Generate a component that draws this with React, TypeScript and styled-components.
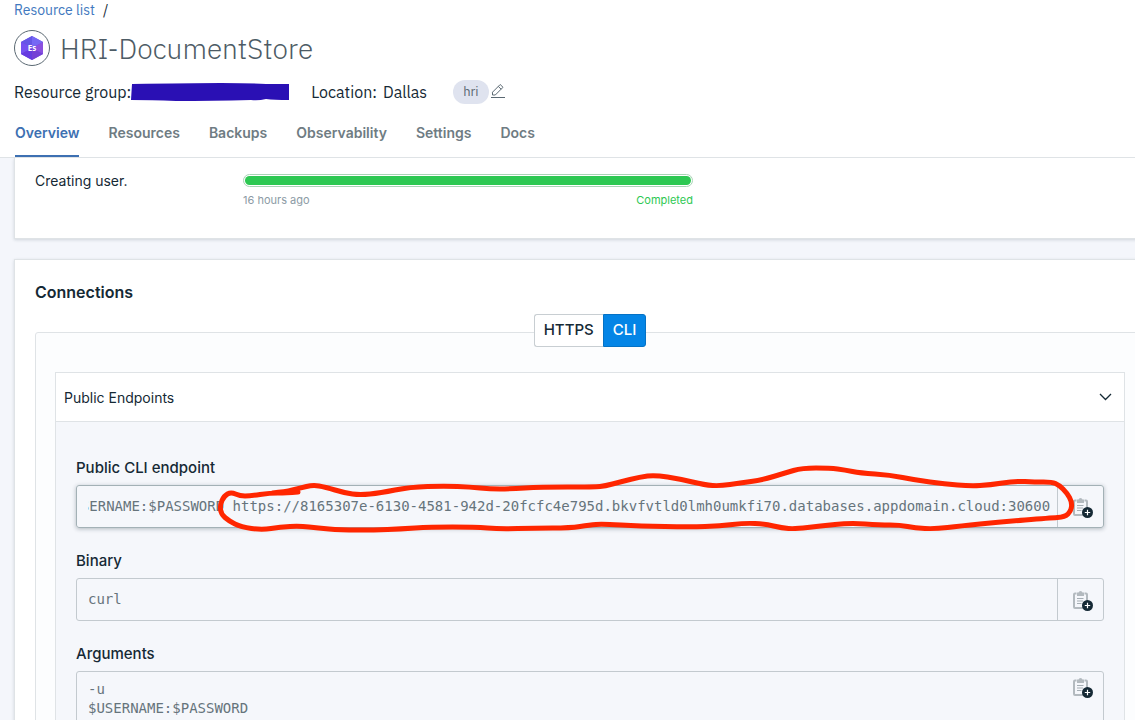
import React, { useLayoutEffect, useRef } from "react";
import styled, { createGlobalStyle } from "styled-components";

const plex = `"IBM Plex Sans", "Noto Sans", sans-serif`;
const inter = `Inter, "Liberation Sans", sans-serif`;
const mono = `"DejaVu Sans Mono", "Liberation Mono", monospace`;
const ink = "#152935";
const muted = "#5a6872";
const line = "#dfe3e6";

const GlobalStyle = createGlobalStyle`
  *, *::before, *::after { box-sizing: border-box; }
  body { margin: 0; background: #f4f6fb; color: ${ink}; font-family: ${inter}; font-size: 14px; }
  button, input, textarea { font: inherit; color: inherit; }
`;

const Page = styled.div`
  display: flex;
  flex-direction: column;
  height: 100vh;
  overflow: hidden;
`;

const Header = styled.header`
  flex: none;
  background: #fff;
  border-bottom: 1px solid ${line};
  padding: 0 14px;
  font-family: ${plex};
`;

const Breadcrumb = styled.nav`
  display: flex;
  gap: 8px;
  font-size: 14px;
  line-height: 20px;
  a { color: #4178be; text-decoration: none; }
`;

const TitleRow = styled.div`
  display: flex;
  align-items: center;
  gap: 10px;
  margin-top: 10px;
`;

const Title = styled.h1`
  margin: 0;
  padding-top: 2px;
  font-size: 28px;
  line-height: 34px;
  font-weight: 300;
  color: #4d5b65;
`;

const InfoRow = styled.div`
  display: flex;
  align-items: center;
  height: 24px;
  margin-top: 14px;
  font-size: 16px;
  line-height: 24px;
  white-space: nowrap;
`;

const Location = styled.span`
  display: flex;
  gap: 6px;
  margin: 0 26px 0 20px;
`;

const Tag = styled.span`
  padding: 0 10px;
  border-radius: 12px;
  background: #dfe3ef;
  color: ${muted};
  font-size: 13px;
  line-height: 24px;
`;

const IconButton = styled.button`
  display: flex;
  padding: 0 0 2px;
  border: 0;
  background: none;
  margin-left: 1px;
`;

const Tabs = styled.nav`
  display: flex;
  gap: 29px;
  margin-top: 16px;
  padding-left: 1px;
  font-family: ${inter};
`;

const Tab = styled.a<{ $active?: boolean }>`
  height: 37px;
  font-size: 14px;
  font-weight: 600;
  line-height: 26px;
  text-decoration: none;
  color: ${(p) => (p.$active ? "#3d70b2" : "#6f7c83")};
  border-bottom: 2px solid ${(p) => (p.$active ? "#3d70b2" : "transparent")};
`;

const Main = styled.main`
  display: flex;
  flex-direction: column;
  flex: 1;
  gap: 20px;
  min-height: 0;
  overflow: hidden;
  padding-left: 14px;
`;

const Card = styled.section<{ $continued?: boolean }>`
  flex: none;
  margin-right: -31px;
  padding: 21px 20px 20px;
  background: #fff;
  border: 1px solid ${line};
  box-shadow: 0 1px 3px rgba(21, 41, 53, 0.16);
  ${(p) => p.$continued && "border-top: 0; padding-top: 12px; padding-bottom: 29px;"}
`;

const Task = styled.div`
  display: grid;
  grid-template-columns: 208px 450px;
`;

const TaskName = styled.span`
  line-height: 22px;
`;

const Track = styled.div`
  height: 13px;
  margin-top: 4px;
  padding: 1px;
  border: 1px solid #a9d3b6;
  border-radius: 7px;
`;

const Bar = styled.div`
  height: 100%;
  border-radius: 5px;
  background: #2dc852;
`;

const TaskMeta = styled.div`
  display: flex;
  justify-content: space-between;
  margin-top: 4px;
  font-size: 11px;
  line-height: 18px;
  color: #8c9ba5;
`;

const Done = styled.span`
  color: #2dc852;
`;

const CardTitle = styled.h2`
  margin: 0;
  font-size: 16px;
  font-weight: 600;
  line-height: 22px;
`;

const Panel = styled.div`
  margin-top: 29px;
  padding: 0 19px 20px;
  background: #fcfdfe;
  border: 1px solid ${line};
  border-radius: 3px;
`;

const Toggle = styled.div`
  display: flex;
  width: fit-content;
  margin: -19px auto 25px;
`;

const ToggleButton = styled.button<{ $active?: boolean }>`
  height: 33px;
  padding: 0 9px 2px;
  font-size: 15px;
  font-weight: 500;
  line-height: 20px;
  color: ${(p) => (p.$active ? "#fff" : ink)};
  background: ${(p) => (p.$active ? "#0485e6" : "#fff")};
  border: 1px solid ${(p) => (p.$active ? "#0572c5" : "#c8ced2")};
  border-right-width: ${(p) => (p.$active ? "1px" : "0")};
  border-radius: ${(p) => (p.$active ? "0 3px 3px 0" : "3px 0 0 3px")};
`;

const Accordion = styled.div`
  border: 1px solid ${line};
  background: #f5f7fb;
`;

const AccordionHeader = styled.button`
  display: flex;
  align-items: center;
  justify-content: space-between;
  width: 100%;
  height: 49px;
  padding: 0 12px 0 8px;
  border: 0;
  border-bottom: 1px solid ${line};
  background: #fff;
`;

const AccordionBody = styled.div`
  display: flex;
  flex-direction: column;
  gap: 21px;
  padding: 34px 20px 20px;
`;

const Label = styled.label`
  display: block;
  margin-bottom: 5px;
  font-size: 15px;
  font-weight: 500;
  line-height: 24px;
`;

const Field = styled.div<{ $raised?: boolean }>`
  position: relative;
  display: flex;
  border: 1px solid ${(p) => (p.$raised ? "#a3b1b6" : "#c3cacf")};
  border-radius: 3px;
  box-shadow: ${(p) => (p.$raised ? "0 1px 4px rgba(21, 41, 53, 0.3)" : "none")};
`;

const Value = styled.input`
  flex: 1;
  min-width: 0;
  height: 41px;
  margin: 0 7px 0 11px;
  padding: 0 0 2px;
  border: 0;
  outline: 0;
  background: none;
  font-family: ${mono};
  font-size: 14px;
  color: #66747c;
`;

const Lines = styled.textarea`
  flex: 1;
  min-width: 0;
  padding: 8px 11px;
  border: 0;
  outline: 0;
  resize: none;
  overflow: hidden;
  background: none;
  font-family: ${mono};
  font-size: 14px;
  line-height: 19px;
  color: #66747c;
`;

const CopyButton = styled.button<{ $top?: boolean }>`
  display: flex;
  align-items: ${(p) => (p.$top ? "flex-start" : "center")};
  width: 46px;
  padding: ${(p) => (p.$top ? "5px 0 0 14px" : "3px 0 0 14px")};
  border: 0;
  border-left: 1px solid ${(p) => (p.$top ? "transparent" : "#c3cacf")};
  background: none;
`;

const Marker = styled.svg`
  position: absolute;
  left: -1px;
  top: -1px;
  overflow: visible;
  pointer-events: none;
`;

const ServiceLogo = () => (
  <svg width="36" height="36" viewBox="0 0 36 36" aria-hidden="true">
    <circle cx="18" cy="18" r="17.5" fill="#fff" stroke="#5a6872" />
    <path d="M18 6 29 12v12L18 30 7 24V12z" fill="#6a4be8" />
    <path d="M18 6 29 12 18 18z" fill="#7668f4" />
    <path d="M18 6 7 12l11 6z" fill="#6557e6" />
    <path d="M7 12v12l11-6z" fill="#7552f0" />
    <path d="M29 12v12l-11-6z" fill="#8a50df" />
    <path d="M7 24l11 6V18z" fill="#663be0" />
    <path d="M29 24l-11 6V18z" fill="#7440d5" />
    <text x="18" y="21" textAnchor="middle" fill="#fff" fontFamily="Noto Sans, sans-serif" fontSize="8" fontWeight="700">
      Es
    </text>
  </svg>
);

const PencilIcon = () => (
  <svg width="16" height="16" viewBox="0 0 16 16" fill="none" stroke="#5a6872" strokeLinejoin="round" aria-hidden="true">
    <path d="M1 14.5h14" />
    <path d="M2.5 12V9.2L10.2 1.5 13 4.3 5.3 12zM8.3 3.4l2.8 2.8" />
  </svg>
);

const ChevronIcon = () => (
  <svg width="13" height="8" viewBox="0 0 13 8" fill="none" stroke={ink} strokeWidth="1.3" aria-hidden="true">
    <path d="M1 1l5.5 5.5L12 1" />
  </svg>
);

const ClipboardIcon = () => (
  <svg width="22" height="22" viewBox="0 0 22 22" aria-hidden="true">
    <path d="M4.500 3.500H3Q2 3.500 2 4.500v12.500q0 1 1 1h9M12.500 3.500H14q1 0 1 1V12" fill="none" stroke="#b3babf" strokeWidth="2" />
    <path d="M5 2.500h1.500Q6.800 1 8.500 1t2 1.500H12V6H5z" fill="#b3babf" />
    <path d="M5 8.500h6.500M5 11h6M5 13.500h4.500" stroke="#a5aeb4" strokeWidth="1.200" />
    <circle cx="15.500" cy="15.500" r="5.500" fill={ink} />
    <path d="M12.800 15.500h5.400M15.500 12.800v5.400" stroke="#fff" strokeWidth="1.200" />
  </svg>
);

const strokePoints: number[][] = [
  [222, 7], [210, 8], [194, 8], [174, 11], [164, 11], [155, 7], [148, 11], [144, 20], [145, 29], [153, 36], [165, 42],
  [186, 45], [204, 42], [224, 41], [242, 43], [264, 45], [299, 45], [324, 44], [354, 42], [399, 42], [424, 44],
  [459, 43], [494, 43], [514, 40], [526, 39], [564, 41], [614, 42], [644, 41], [669, 38], [689, 39], [706, 43],
  [719, 44], [744, 41], [774, 38], [804, 40], [824, 40], [839, 43], [859, 44], [884, 41], [924, 37], [974, 33],
  [989, 32], [995, 26], [996, 17], [991, 8], [983, 0], [976, -3], [959, -3], [939, -4], [914, 0], [894, 1],
  [869, -1], [839, -5], [814, -10], [784, -12], [769, -15], [754, -17], [726, -17], [709, -12], [686, -5], [664, -2],
  [644, 1], [629, 0], [604, -6], [579, -10], [564, -8], [544, -3], [529, 1], [519, 2], [464, 2], [434, 4], [414, 4],
  [394, 2], [369, 1], [334, 2], [304, 8], [284, 10], [269, 8], [249, 2], [237, 0], [224, 3], [209, 7], [184, 9],
];

// Joins the points with quadratic curves through their midpoints.
const smooth = (pts: number[][]) =>
  pts.slice(1, -1).reduce((d, [x, y], i) => {
    const [nx, ny] = pts[i + 2];
    return `${d}Q${x} ${y} ${(x + nx) / 2} ${(y + ny) / 2}`;
  }, `M${pts[0].join(" ")}`);

const tabs = ["Overview", "Resources", "Backups", "Observability", "Settings", "Docs"];

const endpoint =
  "$USERNAME:$PASSWORD https://8165307e-6130-4581-942d-20fcfc4e795d.bkvfvtld0lmh0umkfi70.databases.appdomain.cloud:30600";

export default function App() {
  const endpointRef = useRef<HTMLInputElement>(null);

  useLayoutEffect(() => {
    const el = endpointRef.current;
    if (el) el.scrollLeft = el.scrollWidth;
  }, []);

  return (
    <Page>
      <GlobalStyle />
      <Header>
        <Breadcrumb aria-label="Breadcrumb">
          <a href="#resources">Resource list</a>
          <span>/</span>
        </Breadcrumb>
        <TitleRow>
          <ServiceLogo />
          <Title>HRI-DocumentStore</Title>
        </TitleRow>
        <InfoRow>
          <span>Resource group:</span>
          <svg width="160" height="20" viewBox="0 0 160 20" aria-hidden="true">
            <path d="M1 2Q60 1 90 1t45 1h23v16q-15 0-23-1-8 2-15 1-40 1-75 1-25-1-45-1z" fill="#2a10b4" />
          </svg>
          <Location>
            <span>Location:</span>
            <span>Dallas</span>
          </Location>
          <Tag>hri</Tag>
          <IconButton type="button" aria-label="Edit tags">
            <PencilIcon />
          </IconButton>
        </InfoRow>
        <Tabs>
          {tabs.map((name, i) => (
            <Tab key={name} href={`#${name.toLowerCase()}`} $active={i === 0}>
              {name}
            </Tab>
          ))}
        </Tabs>
      </Header>
      <Main>
        <Card $continued>
          <Task>
            <TaskName>Creating user.</TaskName>
            <div>
              <Track role="progressbar" aria-label="Creating user" aria-valuenow={100}>
                <Bar />
              </Track>
              <TaskMeta>
                <span>16 hours ago</span>
                <Done>Completed</Done>
              </TaskMeta>
            </div>
          </Task>
        </Card>
        <Card>
          <CardTitle>Connections</CardTitle>
          <Panel>
            <Toggle>
              <ToggleButton type="button">HTTPS</ToggleButton>
              <ToggleButton type="button" $active>
                CLI
              </ToggleButton>
            </Toggle>
            <Accordion>
              <AccordionHeader type="button" aria-expanded="true">
                Public Endpoints
                <ChevronIcon />
              </AccordionHeader>
              <AccordionBody>
                <div>
                  <Label htmlFor="endpoint">Public CLI endpoint</Label>
                  <Field $raised>
                    <Value id="endpoint" ref={endpointRef} readOnly value={endpoint} />
                    <CopyButton type="button" aria-label="Copy endpoint">
                      <ClipboardIcon />
                    </CopyButton>
                    <Marker width="1028" height="43" aria-hidden="true">
                      <path
                        d={smooth(strokePoints)}
                        fill="none"
                        stroke="#ff2600"
                        strokeWidth="5"
                        strokeLinecap="round"
                        strokeLinejoin="round"
                      />
                    </Marker>
                  </Field>
                </div>
                <div>
                  <Label htmlFor="binary">Binary</Label>
                  <Field>
                    <Value id="binary" readOnly value="curl" />
                    <CopyButton type="button" aria-label="Copy binary">
                      <ClipboardIcon />
                    </CopyButton>
                  </Field>
                </div>
                <div>
                  <Label htmlFor="arguments">Arguments</Label>
                  <Field>
                    <Lines id="arguments" readOnly rows={3} value={"-u\n$USERNAME:$PASSWORD"} />
                    <CopyButton type="button" aria-label="Copy arguments" $top>
                      <ClipboardIcon />
                    </CopyButton>
                  </Field>
                </div>
              </AccordionBody>
            </Accordion>
          </Panel>
        </Card>
      </Main>
    </Page>
  );
}
